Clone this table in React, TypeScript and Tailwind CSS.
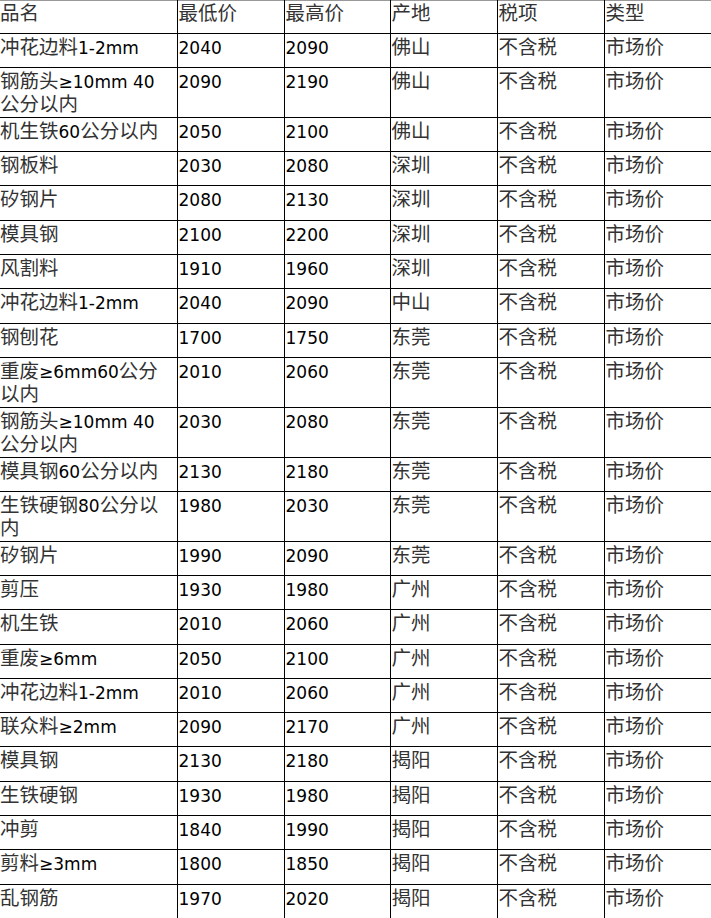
import React from 'react';

type Row = [string | string[], string, string, string];

const rows: Row[] = [
  ['冲花边料1-2mm', '2040', '2090', '佛山'],
  [['钢筋头≥10mm 40', '公分以内'], '2090', '2190', '佛山'],
  ['机生铁60公分以内', '2050', '2100', '佛山'],
  ['钢板料', '2030', '2080', '深圳'],
  ['矽钢片', '2080', '2130', '深圳'],
  ['模具钢', '2100', '2200', '深圳'],
  ['风割料', '1910', '1960', '深圳'],
  ['冲花边料1-2mm', '2040', '2090', '中山'],
  ['钢刨花', '1700', '1750', '东莞'],
  [['重废≥6mm60公分', '以内'], '2010', '2060', '东莞'],
  [['钢筋头≥10mm 40', '公分以内'], '2030', '2080', '东莞'],
  ['模具钢60公分以内', '2130', '2180', '东莞'],
  [['生铁硬钢80公分以', '内'], '1980', '2030', '东莞'],
  ['矽钢片', '1990', '2090', '东莞'],
  ['剪压', '1930', '1980', '广州'],
  ['机生铁', '2010', '2060', '广州'],
  ['重废≥6mm', '2050', '2100', '广州'],
  ['冲花边料1-2mm', '2010', '2060', '广州'],
  ['联众料≥2mm', '2090', '2170', '广州'],
  ['模具钢', '2130', '2180', '揭阳'],
  ['生铁硬钢', '1930', '1980', '揭阳'],
  ['冲剪', '1840', '1990', '揭阳'],
  ['剪料≥3mm', '1800', '1850', '揭阳'],
  ['乱钢筋', '1970', '2020', '揭阳'],
];

const headers = ['品名', '最低价', '最高价', '产地', '税项', '类型'];

// row pitch is fractional (34.3 / 49.5), so spread the rounding over the rows
const heights: number[] = [];
{
  let y = 33;
  for (const r of rows) {
    const next = y + (Array.isArray(r[0]) ? 49.5 : 34.3);
    heights.push(Math.round(next) - Math.round(y));
    y = next;
  }
}

// CJK runs are a touch larger and greyer than the Latin text
function Mixed({ text }: { text: string }) {
  const parts = text.split(/([\u3000-\u9fff\uff00-\uffef]+)/);
  return (
    <>
      {parts.map((p, i) =>
        /[\u3000-\u9fff]/.test(p) ? (
          <span key={i} className="text-[19.5px] leading-[22px] text-[#333]">
            {p}
          </span>
        ) : (
          <span key={i}>{p}</span>
        ),
      )}
    </>
  );
}

function Cell({ children, first, h }: { children: React.ReactNode; first?: boolean; h: number }) {
  return (
    <td
      style={{ height: h }}
      className={`border-b border-black px-[1px] pt-[3px] align-top whitespace-nowrap ${
        first ? 'pl-0' : 'border-l'
      }`}
    >
      {children}
    </td>
  );
}

export default function App() {
  return (
    <div className="w-[711px] bg-white font-['DejaVu_Sans','Noto_Sans_CJK_SC',sans-serif] text-[17px] leading-[22px] text-black">
      <table className="w-[711px] table-fixed border-collapse border-t border-r border-[#999]">
        <colgroup>
          <col className="w-[177px]" />
          <col className="w-[107px]" />
          <col className="w-[106px]" />
          <col className="w-[107px]" />
          <col className="w-[107px]" />
          <col className="w-[107px]" />
        </colgroup>
        <thead>
          <tr>
            {headers.map((h, i) => (
              <td
                key={h}
                className={`h-[33px] border-b border-black px-[1px] pt-[2px] align-top text-[19.5px] text-[#333] ${
                  i === 0 ? 'pl-0' : 'border-l'
                }`}
              >
                {h}
              </td>
            ))}
          </tr>
        </thead>
        <tbody>
          {rows.map(([name, low, high, place], i) => (
            <tr key={i}>
              <Cell first h={heights[i]}>
                {Array.isArray(name) ? (
                  name.map((line, j) => (
                    <div key={j} className="h-[23px]">
                      <Mixed text={line} />
                    </div>
                  ))
                ) : (
                  <Mixed text={name} />
                )}
              </Cell>
              <Cell h={heights[i]}>{low}</Cell>
              <Cell h={heights[i]}>{high}</Cell>
              <Cell h={heights[i]}>
                <Mixed text={place} />
              </Cell>
              <Cell h={heights[i]}>
                <Mixed text="不含税" />
              </Cell>
              <Cell h={heights[i]}>
                <Mixed text="市场价" />
              </Cell>
            </tr>
          ))}
        </tbody>
      </table>
    </div>
  );
}
